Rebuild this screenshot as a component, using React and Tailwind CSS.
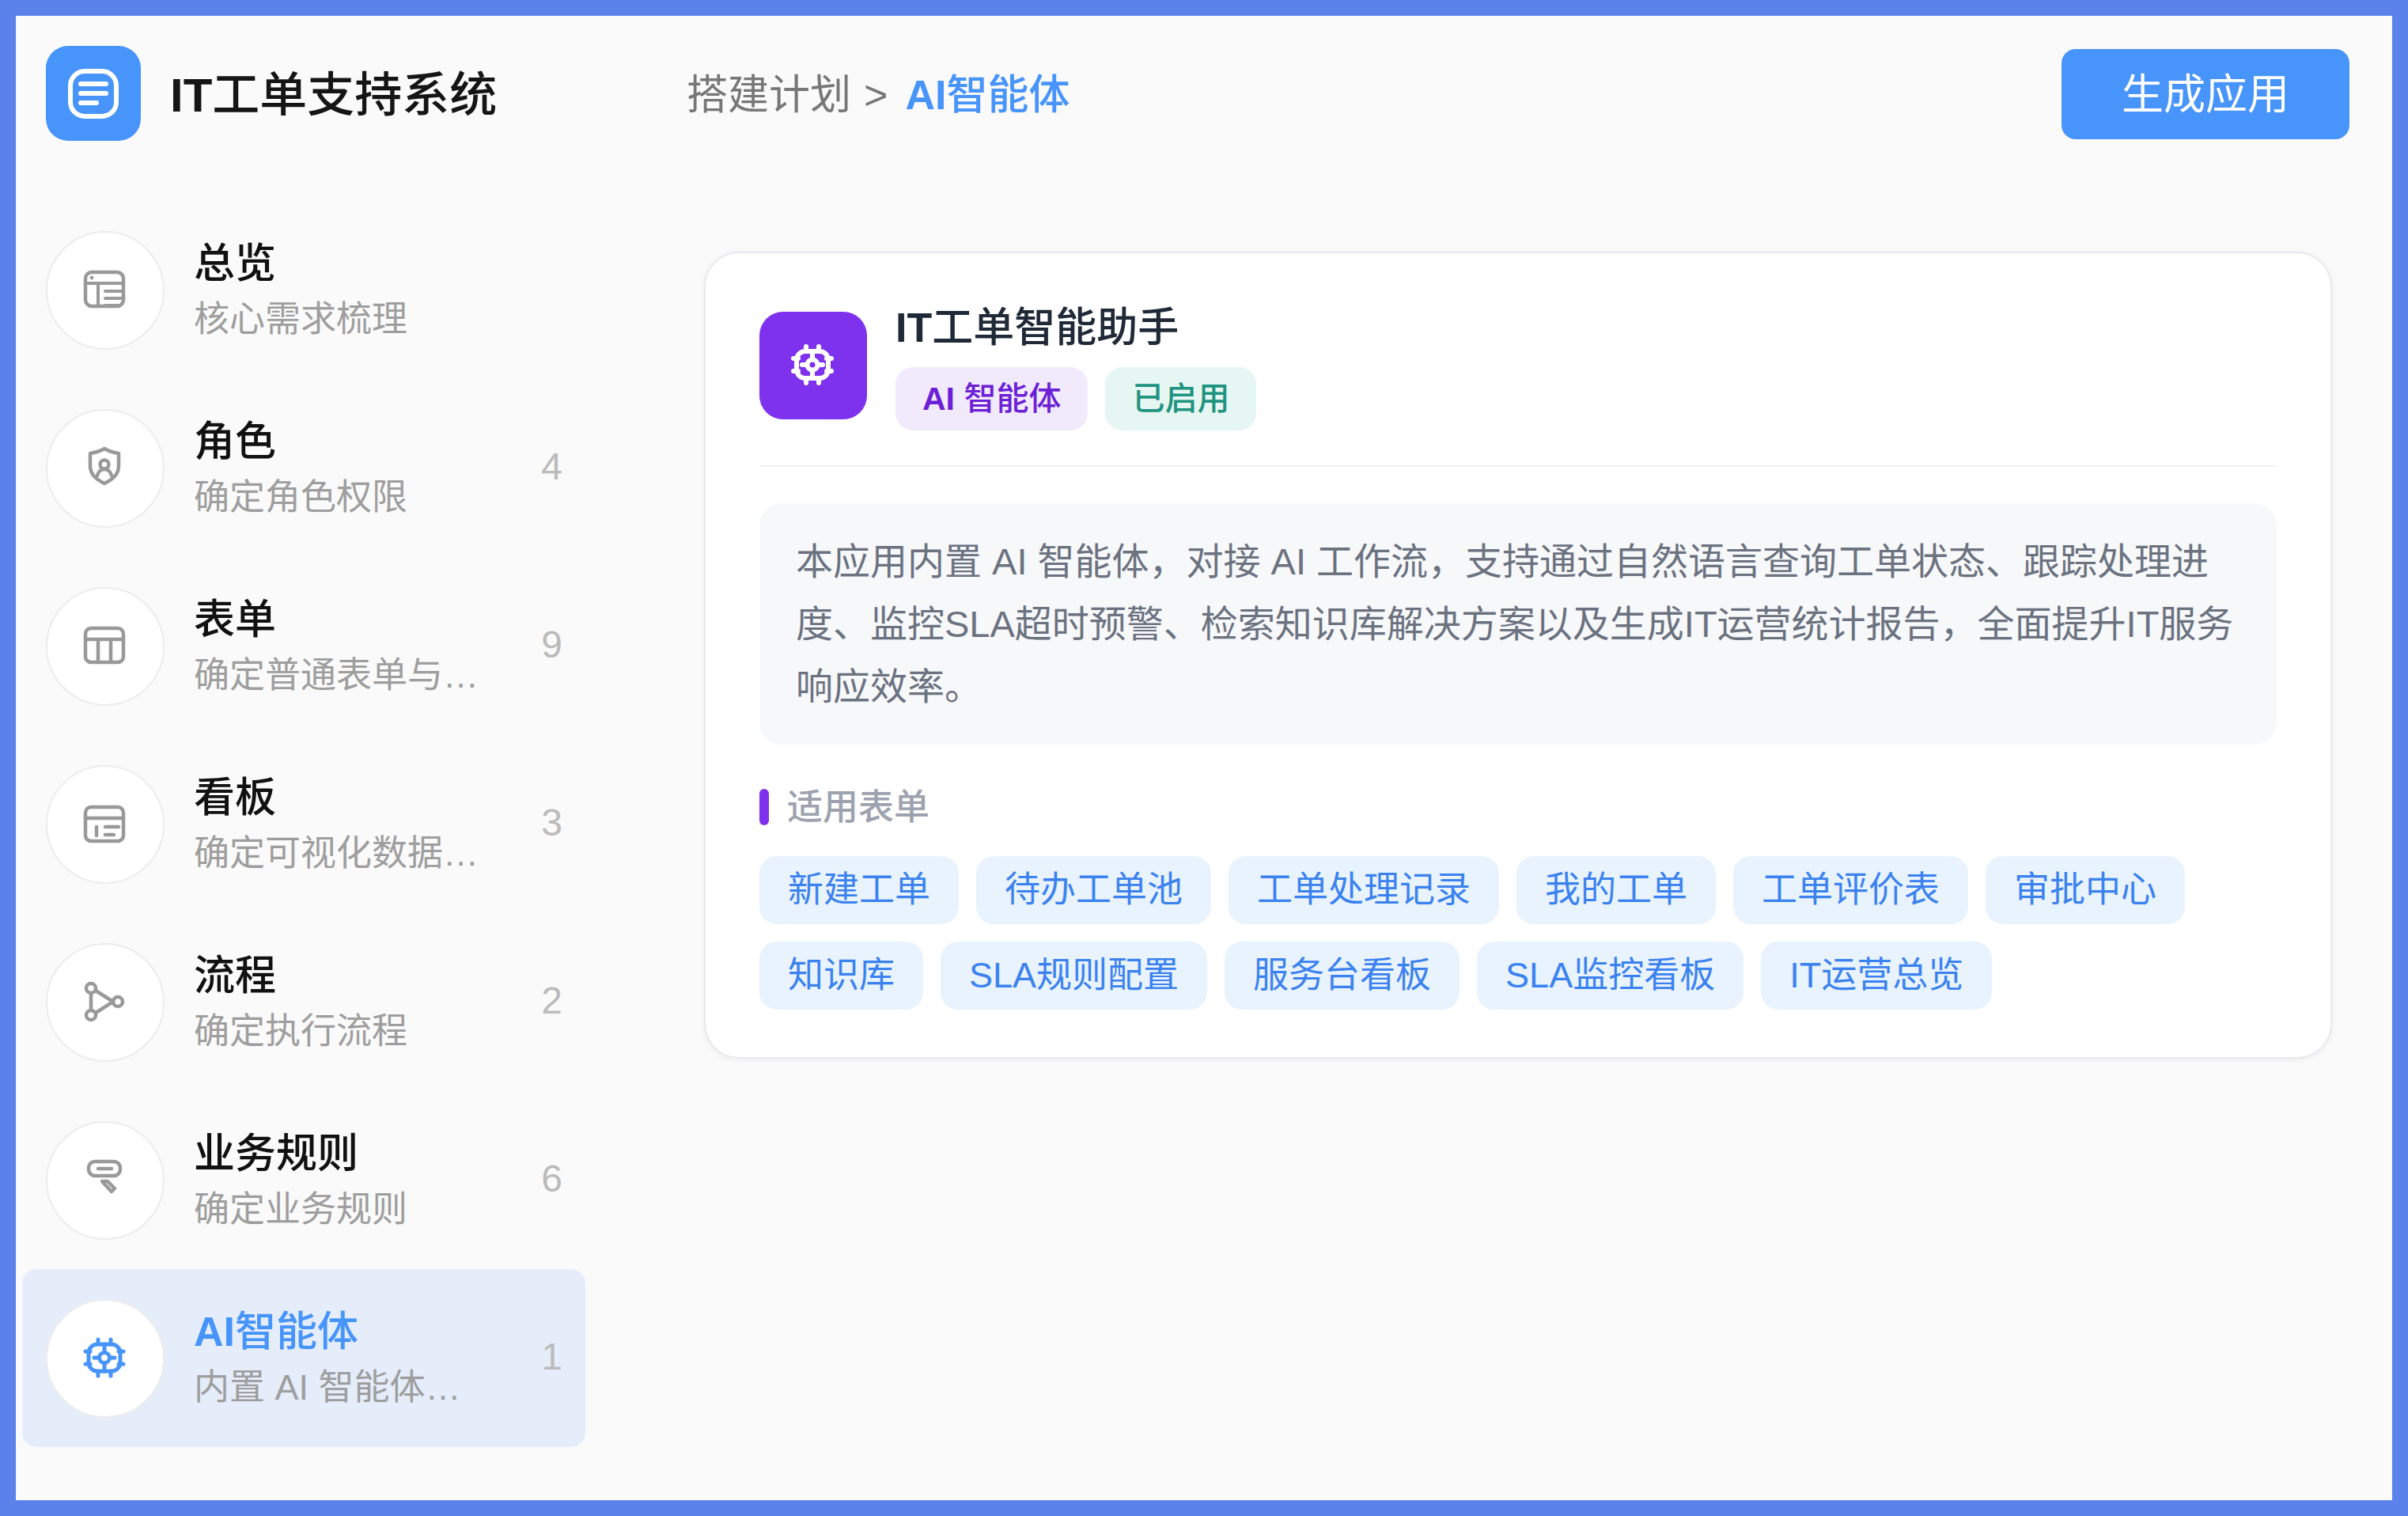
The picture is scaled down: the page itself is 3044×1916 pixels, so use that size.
import { useState } from "react";

const fontStack =
  "font-['Liberation_Sans','Noto_Sans_CJK_SC',sans-serif]";

function Svg({ children, strokeWidth = 4.5 }) {
  return (
    <svg
      viewBox="1 0 56 56"
      className="size-14"
      fill="none"
      stroke="currentColor"
      strokeWidth={strokeWidth}
      strokeLinecap="round"
      strokeLinejoin="round"
      aria-hidden="true"
    >
      {children}
    </svg>
  );
}

function OverviewIcon() {
  return (
    <Svg>
      <rect x="4" y="5" width="48" height="43" rx="8" />
      <path d="M4 19h48M20 19v29M29 29h22M29 38h22M29 47h16" strokeWidth="4" />
      <path d="M12 10l2 2-2 2-2-2Z" strokeWidth="1.5" fill="currentColor" />
    </Svg>
  );
}

function RoleIcon() {
  return (
    <Svg>
      <path d="M28 3c5 3 11 5 18 6v16c0 11-8 17-18 22C18 42 10 36 10 25V9c7-1 13-3 18-6Z" />
      <circle cx="28" cy="23" r="5.5" />
      <path d="M19 37c1-4 4-8 9-8s8 4 9 8" />
    </Svg>
  );
}

function FormIcon() {
  return (
    <Svg>
      <rect x="4" y="5" width="48" height="43" rx="7" />
      <path d="M4 19h48M20 19v29M36 19v29" />
    </Svg>
  );
}

function BoardIcon() {
  return (
    <Svg>
      <rect x="4" y="6" width="48" height="43" rx="7" />
      <path d="M4 20h48M18 31v11M29 31h17M29 41h11" />
    </Svg>
  );
}

function FlowIcon() {
  return (
    <Svg>
      <circle cx="11" cy="10" r="6" />
      <circle cx="11" cy="44" r="6" />
      <circle cx="45" cy="27" r="6" />
      <path d="M11 16v22M17 13l22 14M17 41l22-14" />
    </Svg>
  );
}

function RuleIcon() {
  return (
    <Svg>
      <rect x="8" y="4" width="40" height="18" rx="8" />
      <path d="M20 13h17" />
      <path d="M25 29h7l9 9-4 4Z" />
    </Svg>
  );
}

function AgentIcon({ strokeWidth = 5 }) {
  return (
    <Svg strokeWidth={strokeWidth}>
      <rect x="8" y="10" width="40" height="34" rx="11" />
      <circle cx="28" cy="27" r="6.5" />
      <path d="M28 10v10M28 34v10M15 27h6M35 27h6" />
      <path d="M20 10V4M36 10V4M20 44v6M36 44v6M4 19h6M4 35h6M46 19h6M46 35h6" />
    </Svg>
  );
}

const menu = [
  { key: "overview", title: "总览", desc: "核心需求梳理", icon: OverviewIcon },
  { key: "role", title: "角色", desc: "确定角色权限", count: 4, icon: RoleIcon },
  { key: "form", title: "表单", desc: "确定普通表单与…", count: 9, icon: FormIcon },
  { key: "board", title: "看板", desc: "确定可视化数据…", count: 3, icon: BoardIcon },
  { key: "flow", title: "流程", desc: "确定执行流程", count: 2, icon: FlowIcon },
  { key: "rule", title: "业务规则", desc: "确定业务规则", count: 6, icon: RuleIcon },
  { key: "agent", latin: "AI", title: "智能体", desc: "内置 AI 智能体…", count: 1, icon: AgentIcon },
];

const forms = [
  "新建工单",
  "待办工单池",
  "工单处理记录",
  "我的工单",
  "工单评价表",
  "审批中心",
  "知识库",
  "SLA规则配置",
  "服务台看板",
  "SLA监控看板",
  "IT运营总览",
];

// Liberation Sans has no medium weight, so the latin part of a heading is set in bold
function Heading({ latin, children }) {
  return (
    <span className="font-medium">
      {latin && <b className="font-bold">{latin}</b>}
      {children}
    </span>
  );
}

function MenuItem({ item, active, onClick }) {
  const Icon = item.icon;
  return (
    <button
      type="button"
      onClick={onClick}
      className={`flex h-[225px] w-full items-center rounded-[18px] pl-[30px] pr-[29px] text-left ${
        active ? "bg-[#e5edfb]" : ""
      }`}
    >
      <span
        className={`flex size-[150px] shrink-0 items-center justify-center rounded-full border-2 border-[#ececec] bg-white ${
          active ? "text-[#4794fa]" : "text-[#999999]"
        }`}
      >
        <Icon />
      </span>
      <span className="ml-[37px] min-w-0 flex-1 pt-0.5">
        <span
          className={`block text-[52px] leading-[72px] ${
            active ? "text-[#4794fa]" : "text-[#111111]"
          }`}
        >
          <Heading latin={item.latin}>{item.title}</Heading>
        </span>
        <span className="block truncate text-[45px] leading-[70px] text-[#9e9e9e]">{item.desc}</span>
      </span>
      <span className="pb-1 text-[48px] text-[#bbbbbb]">{item.count}</span>
    </button>
  );
}

function Sidebar({ current, onSelect }) {
  return (
    <aside className="w-[720px] shrink-0 pl-2">
      <div className="flex h-[120px] items-center gap-[37px] pl-[30px]">
        <div className="flex size-[120px] items-center justify-center rounded-[28px] bg-[#4794fa] text-white">
          <svg
            viewBox="0 0 64 64"
            className="size-16"
            fill="none"
            stroke="currentColor"
            strokeWidth="6"
            strokeLinecap="round"
            aria-hidden="true"
          >
            <rect x="3" y="4" width="58" height="57" rx="18" />
            <path d="M16 20h32M16 32h32M16 44h20" />
          </svg>
        </div>
        <h1 className="pt-1.5 text-[60px] text-[#151515]">
          <Heading latin="IT">工单支持系统</Heading>
        </h1>
      </div>
      <nav className="mt-[76px]">
        {menu.map((item) => (
          <MenuItem
            key={item.key}
            item={item}
            active={item.key === current}
            onClick={() => onSelect(item.key)}
          />
        ))}
      </nav>
    </aside>
  );
}

function AgentCard() {
  return (
    <section className="rounded-[44px] border-2 border-[#e8e9ee] bg-white px-[68px] pt-[60px] pb-[60px] shadow-[0_2px_8px_rgba(0,0,0,0.05)]">
      <div className="flex items-center gap-9 border-b-2 border-[#f1f2f4] pb-11">
        <div className="flex size-[136px] shrink-0 items-center justify-center rounded-[30px] bg-[#7f32ed] text-white">
          <AgentIcon strokeWidth={6} />
        </div>
        <div>
          <h2 className="text-[52px] leading-[68px] text-[#1f2937]">
            <Heading latin="IT">工单智能助手</Heading>
          </h2>
          <div className="mt-4 flex gap-[22px]">
            <span className="rounded-[22px] bg-[#f1eafd] px-[34px] text-[41px] leading-[80px] text-[#6d1fd6]">
              <Heading latin="AI"> 智能体</Heading>
            </span>
            <span className="rounded-[22px] bg-[#e6f6f3] px-[34px] text-[41px] leading-[80px] text-[#1f9480]">
              <Heading>已启用</Heading>
            </span>
          </div>
        </div>
      </div>
      <p className="mt-[46px] rounded-[28px] bg-[#f7f8fa] px-[46px] py-[34px] text-[47px] leading-[79px] text-[#6b7280]">
        本应用内置 AI 智能体，对接 AI 工作流，支持通过自然语言查询工单状态、跟踪处理进度、监控SLA超时预警、检索知识库解决方案以及生成IT运营统计报告，全面提升IT服务响应效率。
      </p>
      <div className="mt-[45px] flex items-center gap-[23px]">
        <span className="h-[46px] w-3 rounded-full bg-[#7f32ed]" />
        <h3 className="pt-0.5 text-[45px] leading-[66px] text-[#9ca3af]">
          <Heading>适用表单</Heading>
        </h3>
      </div>
      <ul className="mt-7 flex flex-wrap gap-[22px]">
        {forms.map((name) => (
          <li
            key={name}
            className="rounded-[22px] bg-[#e8f3fe] px-9 text-[45px] leading-[86px] text-[#3b82f0]"
          >
            {name}
          </li>
        ))}
      </ul>
    </section>
  );
}

export default function App() {
  const [current, setCurrent] = useState("agent");
  const active = menu.find((item) => item.key === current);

  return (
    <div className={`flex min-h-screen border-20 border-[#5b81eb] bg-[#fafafa] pt-[38px] ${fontStack}`}>
      <Sidebar current={current} onSelect={setCurrent} />
      <main className="min-w-0 flex-1">
        <header className="flex h-[122px] items-center justify-between pr-[54px] pl-[128px]">
          <div className="flex items-center pt-0.5 text-[52px]">
            <a href="#plan" className="text-[#777777]">搭建计划</a>
            <span className="mx-4 text-[#777777]">&gt;</span>
            <span className="ml-1.5 text-[#4794fa]">
              <Heading latin={active.latin}>{active.title}</Heading>
            </span>
          </div>
          <button type="button" className="h-[114px] rounded-[18px] bg-[#4794fa] px-19 pt-0.5 text-[53px] text-white">
            生成应用
          </button>
        </header>
        <div className="mt-[138px] pr-[76px] pl-[150px]">
          <AgentCard />
        </div>
      </main>
    </div>
  );
}
